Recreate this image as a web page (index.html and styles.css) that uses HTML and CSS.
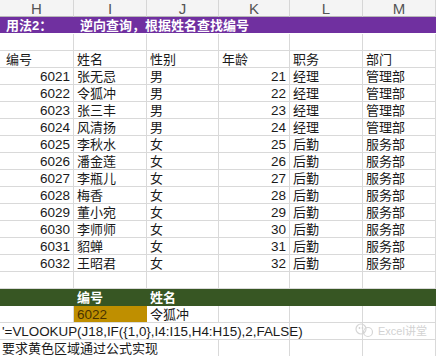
FILE: index.html
```html
<!DOCTYPE html>
<html lang="zh">
<head>
<meta charset="utf-8">
<title>逆向查询</title>
<link rel="stylesheet" href="styles.css">
</head>
<body>
<div class="sheet">
  <div class="ch">H</div><div class="ch">I</div><div class="ch">J</div><div class="ch">K</div><div class="ch">L</div><div class="ch">M</div>

  <div class="c purple lead">用法2：</div><div class="c purple span5">逆向查询，根据姓名查找编号</div>

  <div class="c"></div><div class="c"></div><div class="c"></div><div class="c"></div><div class="c"></div><div class="c"></div>

  <div class="c lead">编号</div><div class="c">姓名</div><div class="c">性别</div><div class="c">年龄</div><div class="c">职务</div><div class="c">部门</div>

  <div class="c num">6021</div><div class="c">张无忌</div><div class="c">男</div><div class="c num">21</div><div class="c">经理</div><div class="c">管理部</div>
  <div class="c num">6022</div><div class="c">令狐冲</div><div class="c">男</div><div class="c num">22</div><div class="c">经理</div><div class="c">管理部</div>
  <div class="c num">6023</div><div class="c">张三丰</div><div class="c">男</div><div class="c num">23</div><div class="c">经理</div><div class="c">管理部</div>
  <div class="c num">6024</div><div class="c">风清扬</div><div class="c">男</div><div class="c num">24</div><div class="c">经理</div><div class="c">管理部</div>
  <div class="c num">6025</div><div class="c">李秋水</div><div class="c">女</div><div class="c num">25</div><div class="c">后勤</div><div class="c">服务部</div>
  <div class="c num">6026</div><div class="c">潘金莲</div><div class="c">女</div><div class="c num">26</div><div class="c">后勤</div><div class="c">服务部</div>
  <div class="c num">6027</div><div class="c">李瓶儿</div><div class="c">女</div><div class="c num">27</div><div class="c">后勤</div><div class="c">服务部</div>
  <div class="c num">6028</div><div class="c">梅香</div><div class="c">女</div><div class="c num">28</div><div class="c">后勤</div><div class="c">服务部</div>
  <div class="c num">6029</div><div class="c">董小宛</div><div class="c">女</div><div class="c num">29</div><div class="c">后勤</div><div class="c">服务部</div>
  <div class="c num">6030</div><div class="c">李师师</div><div class="c">女</div><div class="c num">30</div><div class="c">后勤</div><div class="c">服务部</div>
  <div class="c num">6031</div><div class="c">貂蝉</div><div class="c">女</div><div class="c num">31</div><div class="c">后勤</div><div class="c">服务部</div>
  <div class="c num">6032</div><div class="c">王昭君</div><div class="c">女</div><div class="c num">32</div><div class="c">后勤</div><div class="c">服务部</div>

  <div class="c"></div><div class="c"></div><div class="c"></div><div class="c"></div><div class="c"></div><div class="c"></div>

  <div class="c green"></div><div class="c green">编号</div><div class="c green">姓名</div><div class="c green"></div><div class="c green"></div><div class="c green"></div>

  <div class="c"></div><div class="c gold">6022</div><div class="c">令狐冲</div><div class="c"></div><div class="c"></div><div class="c"></div>

  <div class="c flat formula span4">'=VLOOKUP(J18,IF({1,0},I4:I15,H4:H15),2,FALSE)</div><div class="c"></div><div class="c"></div>

  <div class="c flat span3">要求黄色区域通过公式实现</div><div class="c"></div><div class="c"></div><div class="c"></div>
</div>

<div class="wm">
  <svg class="wm-icon" width="22" height="16" viewBox="0 0 22 16">
    <circle cx="7" cy="6" r="5" fill="none" stroke="#d6d6d6" stroke-width="1.2"/>
    <circle cx="14" cy="9" r="4.5" fill="none" stroke="#d6d6d6" stroke-width="1.2"/>
    <circle cx="5.5" cy="5" r="0.9" fill="#d0d0d0"/>
    <circle cx="8.5" cy="5" r="0.9" fill="#d0d0d0"/>
  </svg>
  <span class="wm-text">Excel讲堂</span>
</div>
</body>
</html>
```

FILE: styles.css
```css
html, body {
  margin: 0;
  padding: 0;
  background: #ffffff;
}

body {
  width: 436px;
  height: 356px;
  overflow: hidden;
  position: relative;
  font-family: "Liberation Sans", "Noto Sans CJK SC", sans-serif;
  font-size: 13px;
  color: #1a1a1a;
}

.sheet {
  display: grid;
  grid-template-columns: 74px 73px 72px 71px 73px 73px;
  grid-auto-rows: 17px;
}

.ch {
  box-sizing: border-box;
  background: #f4f4f4;
  border-right: 1px solid #d6d6d6;
  border-bottom: 1px solid #b8b8b8;
  color: #555555;
  font-size: 15px;
  line-height: 17px;
  text-align: center;
}

.c {
  box-sizing: border-box;
  border-right: 1px solid #d9d9d9;
  border-bottom: 1px solid #d9d9d9;
  line-height: 17px;
  padding: 0 3px;
  white-space: nowrap;
  overflow: visible;
}

.lead {
  padding-left: 6px;
}

.num {
  text-align: right;
  font-size: 13.5px;
}

.purple {
  background: #7030a0;
  color: #ffffff;
  font-weight: bold;
  border-right: none;
  border-bottom: 1px solid #ffffff;
}

.span5 {
  grid-column: span 5;
  padding-left: 6px;
}

.green {
  background: #375623;
  color: #ffffff;
  font-weight: bold;
  border-right: none;
  border-bottom: none;
}

.gold {
  background: #bf8f00;
  color: #4a3300;
  border-right: none;
  font-size: 13.5px;
}

.flat {
  padding-left: 2px;
}

.formula {
  font-size: 13.4px;
}

.span4 {
  grid-column: span 4;
}

.span3 {
  grid-column: span 3;
}

.wm {
  position: absolute;
  left: 354px;
  top: 323px;
  display: flex;
  align-items: center;
  gap: 2px;
}

.wm-text {
  color: #d2d2d2;
  font-size: 11px;
  line-height: 14px;
}
```
